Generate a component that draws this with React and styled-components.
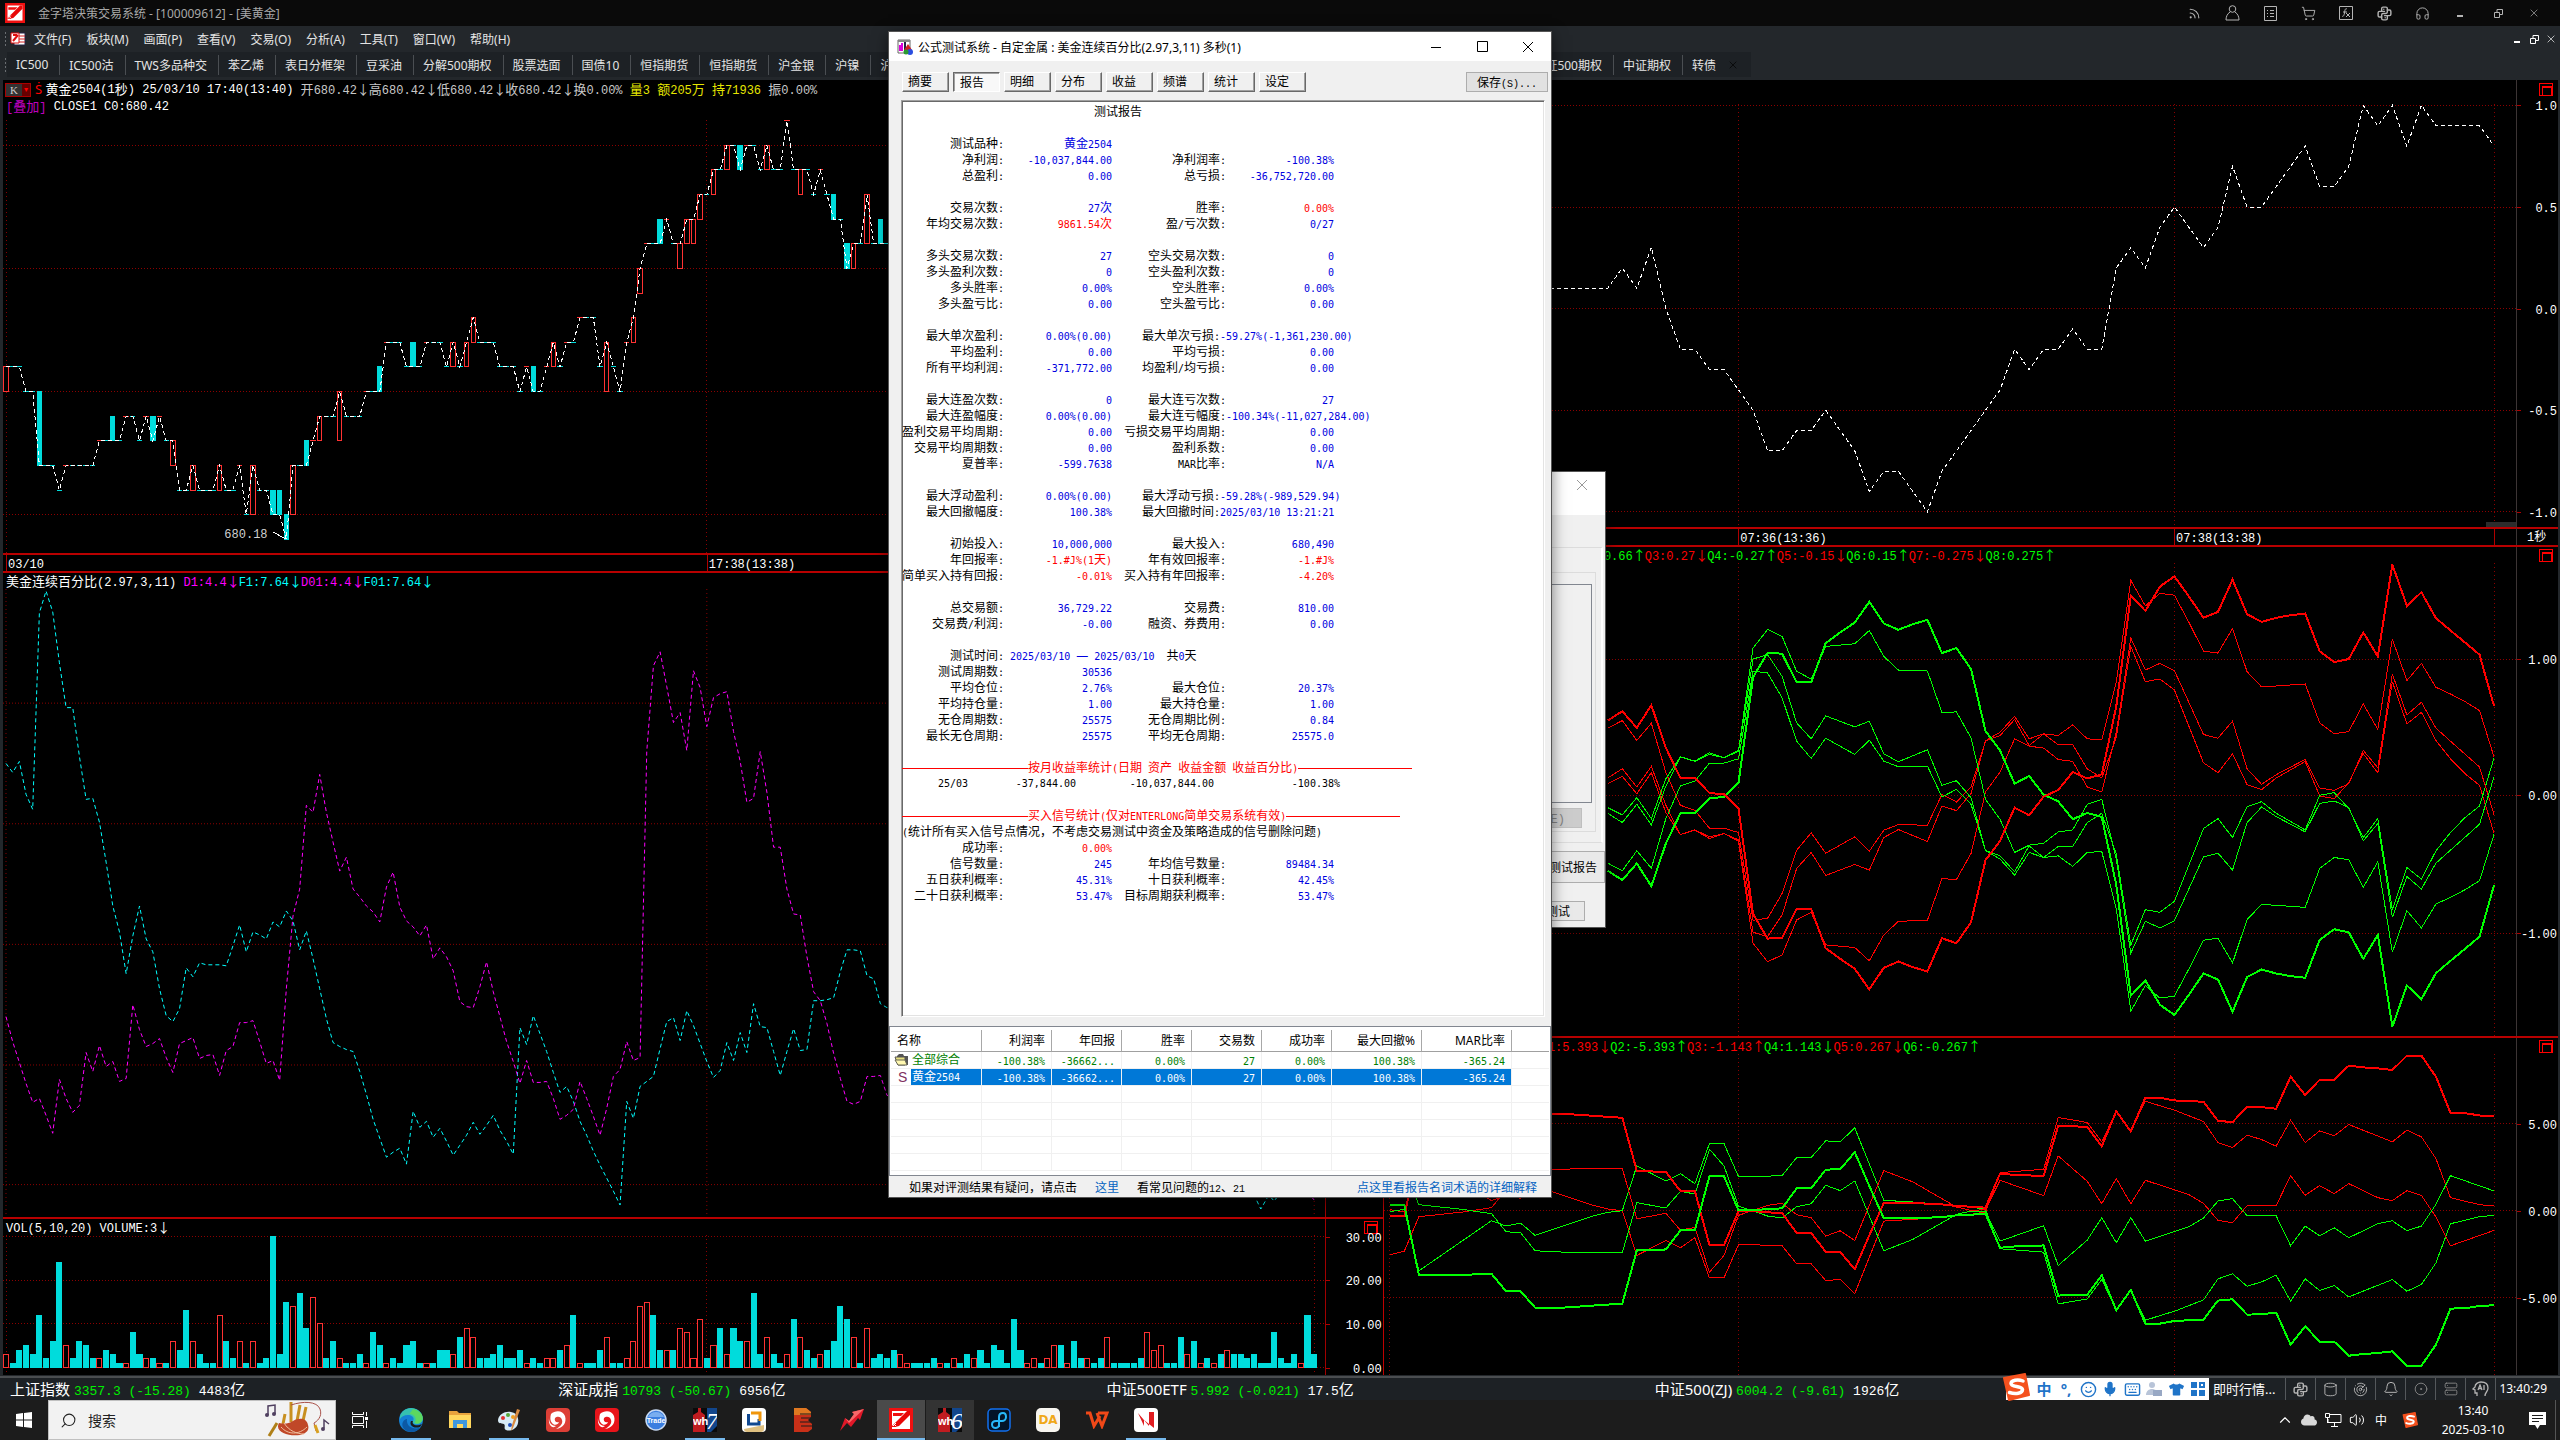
import React from 'react';
import styled, { createGlobalStyle, css } from 'styled-components';
import {
  Rss, ShoppingCart, Headphones, Search, Cylinder, Radar, Bell,
  CircleDot, Server, ChevronUp, Volume2, Mic, Keyboard, Smile,
} from 'lucide-react';
import { TbBrandPython } from 'react-icons/tb';
import { FaTshirt, FaCloud } from 'react-icons/fa';

const SANS = '"Noto Sans", "Noto Sans CJK SC", sans-serif';
const MONO = '"Liberation Mono", "Noto Sans CJK SC", monospace';

const GlobalStyle = createGlobalStyle`
  * { box-sizing: border-box; }
  body { margin: 0; background: #000; font-family: ${SANS}; font-size: 12px; }
  button, input { font: inherit; color: inherit; }
  button { padding: 0; border: 0; background: none; cursor: pointer; }
  a { text-decoration: none; }
`;

/* ---------- data ---------- */

const PRICE = [
  7, 7, 7, 6, 6, 3, 3, 3, 2, 3, 3, 3, 3, 3, 4, 4, 4, 4, 5, 5, 4, 5, 4, 5, 4, 4, 2, 2, 3, 2,
  2, 2, 3, 2, 2, 3, 1, 3, 2, 2, 1, 1, 0, 3, 3, 3, 4, 5, 5, 5, 6, 5, 5, 5, 6, 6, 6, 8, 8, 8,
  7, 7, 7, 8, 8, 8, 7, 8, 7, 8, 9, 8, 8, 8, 7, 7, 7, 6, 7, 6, 6, 7, 8, 7, 8, 8, 9, 9, 9, 7,
  8, 7, 6, 8, 9, 11, 12, 12, 12, 13, 12, 12, 13, 13, 14, 14, 15, 15, 16, 16, 15, 16, 16, 15,
  16, 15, 15, 17, 15, 15, 15, 14, 15, 14, 13, 13, 11, 12, 12, 14, 12, 12, 12,
];

// index, high, low, rising
const CANDLES = [
  [0, 7, 6, 1], [5, 6, 3, 0], [16, 5, 4, 0], [22, 5, 4, 0], [25, 4, 3, 1], [28, 3, 2, 1],
  [32, 3, 2, 1], [37, 3, 1, 1], [40, 2, 1, 0], [41, 2, 1, 0], [42, 1, 0, 0], [43, 3, 1, 1],
  [45, 4, 3, 0], [47, 5, 4, 1], [50, 6, 4, 1], [56, 7, 6, 0], [61, 8, 7, 0], [67, 8, 7, 1],
  [69, 8, 7, 1], [70, 9, 8, 1], [79, 7, 6, 0], [82, 8, 7, 1], [90, 8, 6, 1], [94, 9, 8, 1],
  [95, 11, 10, 1], [98, 13, 12, 0], [101, 12, 11, 1], [102, 13, 12, 1], [103, 13, 12, 1],
  [104, 14, 13, 1], [106, 15, 14, 1], [108, 16, 15, 1], [110, 16, 15, 0], [114, 16, 15, 1],
  [119, 15, 14, 1], [124, 14, 13, 0], [126, 12, 11, 0], [127, 12, 11, 1], [129, 14, 12, 1],
  [131, 13, 12, 0],
];

const LINE_F = [
  764, 773, 762, 795, 810, 613, 591, 612, 663, 708, 708, 757, 800, 799, 823, 863, 907, 933, 975,
  937, 907, 940, 953, 990, 1017, 1023, 1010, 969, 978, 964, 966, 966, 966, 967, 947, 926, 953,
  933, 936, 940, 923, 928, 912, 922, 951, 932, 960, 990, 1020, 1044, 1048, 1051, 1053, 1073, 1096,
  1121, 1140, 1159, 1154, 1150, 1166, 1113, 1129, 1123, 1139, 1130, 1143, 1157, 1147, 1137, 1124,
  1136, 1127, 1117, 1132, 1143, 1156, 1029, 1046, 1017, 1035, 1053, 1074, 1094, 1088, 1103, 1123,
  1137, 1153, 1167, 1180, 1193, 1207, 1103, 1120, 1088, 1083, 1078, 1050, 1023, 1019, 1042, 1012,
  1027, 1045, 1063, 1079, 1072, 1044, 1062, 1034, 1054, 1005, 1028, 1029, 1053, 1077, 1053, 1030,
  1052, 1051, 1002, 1002, 1001, 999, 973, 951, 951, 952, 977, 980, 1005, 1009, 1009,
];

const LINE_D = [
  1018, 1043, 1064, 1085, 1104, 1100, 1117, 1135, 1081, 1100, 1114, 1107, 1054, 1073, 1047, 1068,
  1063, 1083, 1080, 1006, 1031, 1048, 1045, 1040, 1059, 1074, 1045, 1042, 1039, 1060, 1057, 1056,
  1077, 1052, 1048, 1024, 1024, 1022, 1043, 1065, 1062, 1082, 990, 917, 890, 806, 813, 775, 813,
  843, 872, 858, 890, 898, 907, 913, 923, 888, 873, 908, 922, 928, 937, 926, 960, 949, 958, 972,
  1003, 1008, 1009, 988, 963, 993, 1018, 1043, 1063, 1085, 1062, 1084, 1084, 1083, 1100, 1121,
  1117, 1111, 1083, 1100, 1118, 1137, 1110, 1078, 1071, 1043, 1062, 1059, 752, 666, 652, 687, 723,
  713, 751, 671, 688, 727, 698, 694, 692, 732, 762, 803, 799, 752, 793, 848, 848, 890, 915, 916,
  958, 993, 1002, 1025, 1055, 1080, 1103, 1106, 1103, 1078, 1078, 1077, 1097, 1099,
];

// positive = rising bar, negative = falling bar
const VOLUME = [
  3, -1, -4, -5, -3, -12, -2, -6, -24, 5, -2, -6, -5, -2, 2, -4, -3, -1, 1, -8, -3, 2, -2, 1, -1,
  6, -4, -13, 6, -3, -1, -1, 12, -6, -2, 6, -1, 6, -1, -2, -30, -3, -15, 14, -17, -9, 16, 10, -2,
  -6, 2, -1, -1, -3, 1, -8, -5, 1, -2, -1, -5, -6, -1, 1, -1, -4, -4, 3, -7, 9, 7, -2, -2, -3, -5,
  -2, -2, -4, 1, -2, -1, 2, 2, -4, 5, -12, 1, -1, -1, -4, 7, -1, -1, 2, 6, 14, 15, -12, -4, 4, -4,
  9, 8, 2, 11, -2, 5, -9, 3, -9, -6, 6, -17, -3, 7, -3, -1, 3, -11, 7, -4, -2, 3, -4, -6, -14, -11,
  7, -1, 9, -2, -3, -2, -4, 3, 1, -1, -1, -1, -2, 1, -1, 2, -1, -3, 2, -4, -1, -5, -4, -1, -11, -4,
  1, 2, -1, 2, 5, -5, 1, -6, -2, 2, -1, -2, 7, -1, -1, -1, -1, -2, 8, 4, 5, -1, -1, -7, 3, -6, 1,
  -2, 1, -3, 4, -3, -3, -2, -3, -1, -1, -8, -2, -1, -3, 1, -12, -3,
];

const pairs = (text) => text.trim().split(/\s+/).map((p) => p.split(':').map(Number));
const mirror = (points, zero) => points.map(([x, y]) => [x, 2 * zero - y]);

const CLOSE = pairs(`-13:.1 -9:.1 -8:.2 -7:.1 -6:.3 -5:0 -4:-.2 -3:-.2 -2:-.3 -1:-.3 0:-.4 1:-.5
  2:-.7 3:-.7 4:-.6 5:-.6 6:-.5 7:-.6 8:-.7 9:-.9 10:-.8 11:-.8 12:-.9 13:-1 14:-.8 15:-.7 16:-.6
  17:-.5 18:-.4 19:-.2 20:-.3 21:-.2 22:-.2 23:-.1 24:-.2 25:-.2 26:.2 27:.3 28:.2 29:.4 30:.5 31:.4
  32:.3 33:.4 34:.7 35:.5 36:.5 37:.6 38:.7 39:.8 40:.6 41:.6 42:.7 43:1 44:.9 45:1 46:.8 47:1
  48:.9 51:.9 52:.8`).map(([x, y]) => [x, -y]);

const MID_ZERO = 769;
const MID_MAIN = pairs(`-9:543 -8:515 -7:565 -6:497 -5:625 -4:716 -3:716 -2:761 -1:765 0:808 1:1125
  2:1199 3:1196 4:1110 5:1110 6:1228 7:1260 8:1290 9:1352 10:1287 11:1268 12:1285 13:1298 14:1198
  15:1213 16:1150 17:963 18:905 19:805 20:828 21:772 22:752 23:698 24:717 25:705 26:500 27:167
  28:213 29:140 30:109 31:170 32:234 33:216 34:119 35:223 36:246 37:234 38:226 39:221 40:335 41:367
  42:358 43:278 44:350 45:74 46:198 47:157 48:235 49:272 50:308 51:345 52:500`);
const MID_THIN = [
  pairs(`-9:972 -8:995 -7:935 -6:987 -5:838 -4:740 -3:725 -2:671 -1:671 0:658 1:394 2:400 3:475
    4:605 5:657 6:596 8:645 9:602 10:665 11:682 13:680 14:773 15:750 16:795 17:934 18:950 19:998
    20:920 21:955 22:922 23:922 24:850 25:822 26:945 27:1218 28:1112 29:1120 30:1087 32:868 33:838
    34:895 35:802 36:787 37:822 39:872 40:768 41:760 42:808 43:895 44:838 45:1112 46:985 47:1020
    48:935 49:880 50:835 51:800 52:655`),
  pairs(`-9:822 -8:850 -7:795 -6:857 -5:740 -4:652 -3:666 -2:645 -1:655 0:636 1:358 2:345 3:410
    4:550 5:598 6:529 8:562 9:545 10:643 11:667 13:631 14:738 15:724 16:775 17:934 18:960 19:1008
    20:940 21:955 22:950 23:982 24:940 25:937 26:1110 27:1417 28:1340 29:1378 30:1372 31:1290
    32:1204 33:1198 34:1272 35:1142 36:1096 39:1105 40:988 41:955 42:962 43:1045 44:968 45:1240
    46:1115 47:1167 48:1095 49:1075 50:1052 51:1025 52:885`),
  pairs(`-9:805 -8:827 -7:775 -6:838 -5:718 -4:652 -3:665 -2:640 -1:655 0:632 1:325 2:269 3:290
    4:395 5:418 6:320 8:312 9:272 10:350 11:391 13:394 14:519 15:517 16:595 17:780 18:840 19:940
    20:918 21:912 22:878 23:872 24:795 25:780 26:960 27:1243 28:1147 29:1167 30:1145 32:953 33:942
    34:993 35:850 36:803 37:832 39:878 40:792 41:785 42:805 43:905 44:853 45:1135 46:1012 47:1050
    48:972 51:855 52:712`),
];

const LOW_ZERO = 544;
const LOW_MAIN = pairs(`-24:527 -23:527 -22:736 -19:736 -17:733 -16:785 -15:785 -14:834 -12:834
  -8:822 -7:663 -5:660 -4:603 -3:602 -2:441 -1:441 0:543 1:543 2:539 3:537 4:477 5:477 6:421 7:420
  8:369 9:470 10:567 12:567 14:563 15:558 16:556 17:553 18:655 19:651 21:648 22:798 24:795 25:737
  26:842 27:781 28:882 29:882 30:874 32:870 33:813 34:809 35:855 36:854 37:849 38:945 39:890 40:936
  41:936 42:978 43:973 44:970 45:965 46:1008 47:1008 48:945 49:837 50:836 51:829 52:827`);
const LOW_THIN = [
  pairs(`-24:547 -23:540 -22:724 -17:574 -16:590 -15:581 -14:618 -10:560 -9:549 -8:544 -7:410 -5:455
    -4:433 -3:463 -2:343 -1:343 0:442 1:442 3:439 4:385 5:385 6:335 7:338 8:296 10:513 12:518 14:525
    16:533 17:540 18:658 21:668 22:823 24:808 25:750 26:842 27:781 28:872 29:858 30:845 32:811
    33:748 34:733 35:770 36:757 37:737 38:815 39:748 40:783 41:768 42:802 45:750 46:785 47:765
    48:700 49:583 51:562 52:558`),
  pairs(`-24:412 -23:423 -22:526 -19:540 -17:553 -16:607 -15:610 -14:664 -11:670 -8:670 -7:520
    -5:536 -4:486 -3:494 -2:360 -1:410 0:530 1:545 2:560 3:566 4:532 5:523 6:468 7:484 8:455 10:664
    12:630 14:580 15:555 16:545 17:547 18:635 21:589 22:708 24:632 25:565 26:640 27:565 28:635
    31:592 32:566 33:515 34:508 35:559 37:559 38:649 39:590 40:619 41:595 42:625 44:583 45:574
    46:604 47:590 48:525 49:439 52:485`),
];

/* ---------- mixed width text ---------- */

const Lat = styled.span`
  font-family: ${MONO};
  font-size: var(--lat, 12px);
  line-height: 1;
`;

const Arrow = styled.span`
  display: inline-block;
  width: 12px;
  text-align: center;
`;

// Latin runs are half width, Chinese runs are full width
function Mixed({ children }) {
  return String(children).split(/([\x20-\x7e]+|[↓↑])/).filter(Boolean).map((part, i) => {
    if (part === '↓' || part === '↑') return <Arrow key={i}>{part}</Arrow>;
    return /^[\x20-\x7e]/.test(part) ? <Lat key={i}>{part}</Lat> : part;
  });
}

/* ---------- frame ---------- */

const Desktop = styled.div`
  position: relative;
  min-height: 100vh;
  display: flex;
  flex-direction: column;
  overflow: hidden;
  background: #23272b;
  color: #fff;
`;

const TitleBar = styled.header`
  display: flex;
  align-items: center;
  height: 26px;
  padding: 0 9px 0 5px;
  background: #0a0a0a;
  color: #a8a8a8;
`;

const TitleText = styled.h1`
  margin: 0 auto 0 13px;
  font-size: 12px;
  font-weight: 400;
`;

const TitleIcons = styled.div`
  display: flex;
  align-items: center;
`;

const IconButton = styled.button`
  display: flex;
  align-items: center;
  justify-content: center;
  width: ${(p) => p.$w || 38}px;
  height: 20px;
  color: ${(p) => p.$color || '#b4b4b4'};
`;

const MenuBar = styled.nav`
  display: flex;
  align-items: center;
  height: 26px;
  padding: 0 1px 0 4px;
  gap: 15px;
  background: #23272b;
  color: #e4e4e4;
`;

const Grip = styled.i`
  width: 3px;
  height: 16px;
  background-image: radial-gradient(#6a6e72 1px, transparent 1px);
  background-size: 3px 4px;
`;

const MenuIcon = styled.span`
  display: flex;
  margin: 0 -7px 0 -12px;
`;

const MenuRight = styled.div`
  display: flex;
  margin-left: auto;
`;

const TabBar = styled.nav`
  display: flex;
  align-items: center;
  height: 27px;
  padding: 0 0 2px 4px;
  color: #e4e4e4;
`;

const TabGroup = styled.div`
  display: flex;
  align-items: center;
  height: 25px;
  background: #1d2125;
  flex: 0 0 auto;
`;

const PageTab = styled.button`
  height: 20px;
  padding: 0 11px 0 9px;
  border-right: ${(p) => (p.$last ? 0 : '1px solid #4a4e52')};
  white-space: nowrap;
`;

const HiddenTabs = styled.div`
  flex: 0 0 608px;
  height: 25px;
  background: #1d2125;
`;

const TabClose = styled.button`
  width: 12px;
  margin-right: 12px;
  color: #000;
`;

/* ---------- chart panels ---------- */

const Workspace = styled.main`
  flex: 1;
  display: grid;
  grid-template-columns: 54fr 46fr;
  min-height: 900px;
  padding: 1px 2px 1px 3px;
`;

const Column = styled.section`
  display: grid;
  grid-template-rows: ${(p) => p.$rows};
  min-width: 0;
  border-left: ${(p) => (p.$edge ? '1px solid #c00000' : 0)};
  background: #000;
`;

const PanelBox = styled.section`
  display: flex;
  flex-direction: column;
  min-height: 0;
  min-width: 0;
  border-bottom: ${(p) => (p.$last ? 0 : '2px solid #b80000')};
`;

const Strip = styled.div`
  display: flex;
  ${(p) => (p.$grow ? css`flex: 1; min-height: 0;` : css`height: ${p.$h}px;`)}
`;

const Main = styled.div`
  position: relative;
  flex: 1;
  min-width: 0;
`;

const Side = styled.div`
  position: relative;
  flex: 0 0 ${(p) => p.$w}px;
  border-left: 1px solid ${(p) => p.$line};
`;

const Head = styled(Main)`
  padding: ${(p) => (p.$tall ? 1 : 0)}px 0 0 3px;
  font-size: 13px;
  line-height: 17px;
  white-space: pre;
  --lat: 12px;
`;

const HeadLine = styled.div`
  display: flex;
  align-items: center;
  height: 17px;
`;

const Tint = styled.span`
  color: ${(p) => p.$c};
`;

const HiddenName = styled.span`
  display: inline-block;
  width: ${(p) => p.$w}px;
`;

const KButton = styled.button`
  display: flex;
  width: 26px;
  height: 14px;
  margin: 0 4px 0 -1px;
  border: 1px solid #a00;
  background: #333;
  color: #ccc;
  font: 11px/12px "Liberation Serif", serif;
  & > span { width: 16px; }
  & > i { flex: 1; background: #600; color: #f00; font: 8px/12px "DejaVu Sans", sans-serif; }
`;

const PlotSvg = styled.svg`
  position: absolute;
  inset: 0;
  width: 100%;
  height: 100%;
  display: block;
  shape-rendering: crispEdges;
  & * { vector-effect: non-scaling-stroke; }
`;

const Tick = styled.span`
  position: absolute;
  right: 1px;
  height: 16px;
  margin-top: -8px;
  font-size: 13px;
  line-height: 16px;
`;

const TickMark = styled.i`
  position: absolute;
  left: 0;
  width: 4px;
  height: 1px;
  background: #b00000;
`;

const TimeMain = styled(Main)`
  border-top: 2px solid #b80000;
  font-size: 13px;
`;

const TimeSide = styled(Side)`
  border-top: 2px solid #b80000;
  padding-left: 10px;
  font-size: 12px;
  line-height: 16px;
`;

const TimeLabel = styled.span`
  position: absolute;
  top: 0;
  padding-left: 1px;
  height: 16px;
  line-height: 16px;
  border-left: 1px solid #b00000;
  white-space: nowrap;
`;

const PriceNote = styled.span`
  position: absolute;
  margin: -10px 0 0 -62px;
  font-size: 12px;
  line-height: 16px;
  color: #d0d0d0;
`;

const Expand = styled.button`
  position: absolute;
  right: 5px;
  top: ${(p) => p.$top || 2}px;
  width: 14px;
  height: 13px;
  border: 1px solid #f00;
  &::after {
    content: '';
    display: block;
    width: 8px;
    height: 7px;
    margin: 2px;
    border: 1px solid #f00;
    border-top-width: 2px;
  }
`;

const DARK_RED = '#8c0000';

function Chart({ box, rows, cols, children }) {
  const [x0, x1, y0, y1] = box;
  return (
    <PlotSvg viewBox={`${x0} ${y0} ${x1 - x0} ${y1 - y0}`} preserveAspectRatio="none" aria-hidden="true">
      {rows.map((y) => (
        <line key={`h${y}`} x1={x0} x2={x1} y1={y} y2={y} stroke={DARK_RED} strokeDasharray="1 2" />
      ))}
      {cols.map((x) => (
        <line key={`v${x}`} x1={x} x2={x} y1={y0} y2={y1} stroke={DARK_RED} strokeDasharray="1 3" />
      ))}
      {children}
    </PlotSvg>
  );
}

function Poly({ points, color, width = 1, dash }) {
  return (
    <polyline
      points={points.map((p) => p.join(',')).join(' ')}
      fill="none" stroke={color} strokeWidth={width} strokeDasharray={dash}
    />
  );
}

function AxisTicks({ box, ticks }) {
  const [, , y0, y1] = box;
  return ticks.map(([y, label]) => {
    const top = `${((y - y0) / (y1 - y0)) * 100}%`;
    return (
      <React.Fragment key={label}>
        <TickMark style={{ top }} />
        <Tick style={{ top }}><Lat>{label}</Lat></Tick>
      </React.Fragment>
    );
  });
}

const LX0 = -0.45;
const LX1 = 197.57;
const RX0 = -24.4;
const RX1 = 53.53;
const L_COLS = [0, 105, 196];
const R_COLS = [-24, 0, 30, 52];
const R_LINE = '#3c3434';
const R_AXIS = 42;
const indexed = (ys) => ys.map((y, i) => [i, y]);
const at = (x, x0, x1) => ({ left: `${((x - x0) / (x1 - x0)) * 100}%` });

function PricePanel() {
  const box = [LX0, LX1, -17.03, 0.555];
  const drawn = new Set(CANDLES.map((c) => c[0]));
  return (
    <PanelBox>
      <Strip $h={40}>
        <Head $tall>
          <HeadLine>
            <KButton><span>K</span><i>▾</i></KButton>
            <Tint $c="#f00">Ṡ </Tint>
            <Mixed>{'黄金2504(1秒) 25/03/10 17:40(13:40) '}</Mixed>
            <Tint $c="#c8c8c8"><Mixed>{'开680.42↓高680.42↓低680.42↓收680.42↓换0.00% '}</Mixed></Tint>
            <Tint $c="#e6e600"><Mixed>{'量3 额205万 持71936 '}</Mixed></Tint>
            <Tint $c="#c8c8c8"><Mixed>振0.00%</Mixed></Tint>
          </HeadLine>
          <HeadLine>
            <Tint $c="#c000c0"><Mixed>{'[叠加] '}</Mixed></Tint>
            <Mixed>CLOSE1 C0:680.42</Mixed>
          </HeadLine>
        </Head>
        <Side $w={58} $line="#a00000" />
      </Strip>
      <Strip $grow>
        <Main>
          <Chart box={box} rows={[-16, -11, -6, -1]} cols={L_COLS}>
            {PRICE.map((v, i) => !drawn.has(i) && (
              <line
                key={i} x1={i - 0.4} x2={i + 0.4} y1={-v} y2={-v}
                stroke={v > (PRICE[i - 1] ?? v) ? '#ff3232' : '#00dcdc'}
              />
            ))}
            {CANDLES.map(([i, hi, lo, up]) => (
              <rect
                key={i} x={i - 0.33} width={0.66} y={-hi} height={hi - lo}
                fill={up ? '#000' : '#00dcdc'} stroke={up ? '#ff3232' : '#00dcdc'}
              />
            ))}
            <Poly points={indexed(PRICE.map((v) => -v))} color="#fff" dash="4 3" />
            <line x1={40} x2={42} y1={-0.3} y2={0} stroke="#fff" />
          </Chart>
          <PriceNote style={{ ...at(42, LX0, LX1), top: '96%' }}><Lat>680.18</Lat></PriceNote>
        </Main>
        <Side $w={58} $line="#a00000" />
      </Strip>
      <Strip $h={18}>
        <TimeMain>
          <TimeLabel style={at(0, LX0, LX1)}><Lat>03/10</Lat></TimeLabel>
          <TimeLabel style={at(105, LX0, LX1)}><Lat>17:38(13:38)</Lat></TimeLabel>
        </TimeMain>
        <TimeSide $w={58} $line="#a00000" />
      </Strip>
    </PanelBox>
  );
}

function PercentPanel() {
  const tail = [[178.5, 1190], [179, 1201], [179.6, 1196]];
  const tail2 = [[186.5, 1190], [188, 1211], [189.2, 1197], [190, 1203], [191, 1194]];
  return (
    <PanelBox>
      <Strip $h={16}>
        <Head>
          <Mixed>{'美金连续百分比(2.97,3,11) '}</Mixed>
          <Tint $c="#f0f"><Mixed>D1:4.4↓</Mixed></Tint>
          <Tint $c="#0ff"><Mixed>F1:7.64↓</Mixed></Tint>
          <Tint $c="#f0f"><Mixed>D01:4.4↓</Mixed></Tint>
          <Tint $c="#0ff"><Mixed>F01:7.64↓</Mixed></Tint>
        </Head>
        <Side $w={58} $line="#a00000" />
      </Strip>
      <Strip $grow>
        <Main>
          <Chart box={[LX0, LX1, 589, 1219]} rows={[703.5, 824.5, 945.5, 1066.5, 1186.5]} cols={L_COLS}>
            <Poly points={indexed(LINE_F)} color="#0ff" dash="4 3" />
            <Poly points={indexed(LINE_D)} color="#f0f" dash="4 3" />
            <Poly points={tail} color="#0ff" dash="4 3" />
            <Poly points={tail2} color="#0ff" dash="4 3" />
            <line x1={195} x2={196} y1={1194} y2={1202} stroke="#f0f" strokeDasharray="4 3" />
          </Chart>
        </Main>
        <Side $w={58} $line="#a00000" />
      </Strip>
    </PanelBox>
  );
}

function VolumePanel() {
  const box = [LX0, LX1, -30.4, 1.7];
  return (
    <PanelBox $last>
      <Strip $h={16}>
        <Head><Lat>{'VOL(5,10,20) VOLUME:3'}</Lat><Arrow>↓</Arrow></Head>
        <Side $w={58} $line="#a00000"><Expand aria-label="展开" /></Side>
      </Strip>
      <Strip $grow>
        <Main>
          <Chart box={box} rows={[-30, -20, -10, 0]} cols={L_COLS}>
            {VOLUME.map((v, i) => (
              <rect
                key={i} x={i - 0.38} width={0.76} y={-Math.abs(v)} height={Math.abs(v)}
                fill={v > 0 ? '#000' : '#00dcdc'} stroke={v > 0 ? '#ff3232' : '#00dcdc'}
              />
            ))}
          </Chart>
        </Main>
        <Side $w={58} $line="#a00000">
          <AxisTicks box={box} ticks={[[-30, '30.00'], [-20, '20.00'], [-10, '10.00'], [0, '0.00']]} />
        </Side>
      </Strip>
    </PanelBox>
  );
}

const Thumb = styled.i`
  position: absolute;
  right: 0;
  bottom: 0;
  width: 30px;
  height: 5px;
  background: #2c2c2c;
`;

function ClosePanel() {
  const box = [RX0, RX1, -1.007, 1.073];
  return (
    <PanelBox>
      <Strip $h={24}>
        <Head />
        <Side $w={R_AXIS} $line={R_LINE}><Expand $top={3} aria-label="展开" /></Side>
      </Strip>
      <Strip $grow>
        <Main>
          <Chart box={box} rows={[-1, -0.5, 0, 0.5, 1]} cols={R_COLS}>
            <Poly points={CLOSE} color="#fff" dash="4 3" />
          </Chart>
          <Thumb />
        </Main>
        <Side $w={R_AXIS} $line={R_LINE}>
          <AxisTicks box={box} ticks={[[-1, '1.0'], [-0.5, '0.5'], [0, '0.0'], [0.5, '-0.5'], [1, '-1.0']]} />
        </Side>
      </Strip>
      <Strip $h={18}>
        <TimeMain>
          <TimeLabel style={at(0, RX0, RX1)}><Lat>07:36(13:36)</Lat></TimeLabel>
          <TimeLabel style={at(30, RX0, RX1)}><Lat>07:38(13:38)</Lat></TimeLabel>
          <TimeLabel style={at(52, RX0, RX1)} />
        </TimeMain>
        <TimeSide $w={R_AXIS} $line={R_LINE}><Mixed>1秒</Mixed></TimeSide>
      </Strip>
    </PanelBox>
  );
}

const RED = '#f00';
const GREEN = '#0f0';

function FanPanel({ box, rows, ticks, zero, main, thin, flip, head, lead, last }) {
  const [mainA, mainB] = flip ? [GREEN, RED] : [RED, GREEN];
  return (
    <PanelBox $last={last}>
      <Strip $h={16}>
        <Head>
          <HiddenName $w={lead} />
          {head.map((text, i) => <Tint key={text} $c={i % 2 ? GREEN : RED}><Mixed>{text}</Mixed></Tint>)}
        </Head>
        <Side $w={R_AXIS} $line={R_LINE}><Expand aria-label="展开" /></Side>
      </Strip>
      <Strip $grow>
        <Main>
          <Chart box={box} rows={rows} cols={R_COLS}>
            {thin.map((line, i) => (
              <React.Fragment key={i}>
                <Poly points={mirror(line, zero)} color={RED} />
                <Poly points={line} color={GREEN} />
              </React.Fragment>
            ))}
            <Poly points={mirror(main, zero)} color={mainB} width={2} />
            <Poly points={main} color={mainA} width={2} />
          </Chart>
        </Main>
        <Side $w={R_AXIS} $line={R_LINE}><AxisTicks box={box} ticks={ticks} /></Side>
      </Strip>
    </PanelBox>
  );
}

/* ---------- windows ---------- */

const Window = styled.section`
  position: absolute;
  display: flex;
  flex-direction: column;
  background: #f0f0f0;
  color: #000;
  border: 1px solid #555;
  box-shadow: 0 4px 14px rgba(0, 0, 0, 0.5);
`;

const ReportWindow = styled(Window)`
  left: 888px;
  top: 31px;
  width: 664px;
  height: 1167px;
`;

const BackWindow = styled(Window)`
  left: 1300px;
  top: 471px;
  width: 306px;
  height: 457px;
`;

const WindowTitle = styled.header`
  display: flex;
  align-items: center;
  height: ${(p) => p.$h}px;
  padding: 0 0 0 8px;
  background: #fff;
`;

const WindowName = styled.h2`
  margin: 0 auto 0 5px;
  font-size: 12px;
  font-weight: 400;
`;

const WindowButton = styled(IconButton)`
  width: 46px;
  height: 29px;
`;

const Tools = styled.div`
  display: flex;
  gap: 4px;
  height: 39px;
  padding: 11px 3px 0 13px;
`;

const ToolTab = styled.button`
  width: 47px;
  height: 20px;
  padding: 0 0 0 5px;
  text-align: left;
  line-height: 16px;
  border: 1px solid;
  border-color: #fff #696969 #696969 #fff;
  box-shadow: inset -1px -1px #a0a0a0;
  ${(p) => p.$active && css`
    border-color: #696969 #fff #fff #696969;
    box-shadow: inset 1px 1px #a0a0a0;
    background: #f8f8f8;
    padding: 2px 0 0 6px;
  `}
`;

const SaveButton = styled.button`
  width: 82px;
  height: 20px;
  margin-left: auto;
  border: 1px solid #adadad;
  background: #e1e1e1;
  --lat: 10px;
`;

const ReportBox = styled.div`
  flex: 1;
  margin: 0 6px 9px 12px;
  padding-top: 3px;
  border: 1px solid;
  border-color: #a0a0a0 #fff #fff #a0a0a0;
  box-shadow: inset 1px 1px #696969, inset -1px -1px #e3e3e3;
  background: #fff;
`;

const ReportTable = styled.table`
  table-layout: fixed;
  width: 432px;
  border-spacing: 0;
  line-height: 16px;
  --lat: 10px;
  & td, & th {
    height: 16px;
    padding: 0;
    font-weight: 400;
    text-align: right;
    white-space: pre;
  }
  & ${Lat} { font-family: "DejaVu Sans Mono", monospace; }
`;

const Value = styled.td`
  color: ${(p) => (p.$red ? '#f00' : '#0000e0')};
`;

const Tight = styled.div`
  margin-left: ${(p) => (p.$by ? -6 : 0)}px;
`;

const TightLabel = styled.div`
  padding-right: 6px;
`;

const Rule = styled.i`
  flex: 0 0 ${(p) => p.$w}px;
  height: 1px;
  background: #f00;
`;

const RuleRow = styled.div`
  display: flex;
  align-items: center;
  height: 16px;
  color: #f00;
  & > span { flex: none; }
`;

const MonthRow = styled.div`
  display: grid;
  grid-template-columns: 66px 108px 138px 126px;
  align-items: center;
  height: 16px;
`;

const Plain = styled.div`
  text-align: left;
`;

const Caption = styled.div`
  text-align: center;
`;

// label, value, label, value; "!" marks a red value and "<" a value that starts early
const REPORT = [
  ['测试品种', '黄金2504'],
  ['净利润', '-10,037,844.00', '净利润率', '-100.38%'],
  ['总盈利', '0.00', '总亏损', '-36,752,720.00'],
  null,
  ['交易次数', '27次', '胜率', '!0.00%'],
  ['年均交易次数', '!9861.54次', '盈/亏次数', '0/27'],
  null,
  ['多头交易次数', '27', '空头交易次数', '0'],
  ['多头盈利次数', '0', '空头盈利次数', '0'],
  ['多头胜率', '0.00%', '空头胜率', '0.00%'],
  ['多头盈亏比', '0.00', '空头盈亏比', '0.00'],
  null,
  ['最大单次盈利', '0.00%(0.00)', '最大单次亏损', '<-59.27%(-1,361,230.00)'],
  ['平均盈利', '0.00', '平均亏损', '0.00'],
  ['所有平均利润', '-371,772.00', '均盈利/均亏损', '0.00'],
  null,
  ['最大连盈次数', '0', '最大连亏次数', '27'],
  ['最大连盈幅度', '0.00%(0.00)', '最大连亏幅度', '-100.34%(-11,027,284.00)'],
  ['盈利交易平均周期', '0.00', '亏损交易平均周期', '0.00'],
  ['交易平均周期数', '0.00', '盈利系数', '0.00'],
  ['夏普率', '-599.7638', 'MAR比率', 'N/A'],
  null,
  ['最大浮动盈利', '0.00%(0.00)', '最大浮动亏损', '<-59.28%(-989,529.94)'],
  ['最大回撤幅度', '100.38%', '最大回撤时间', '<2025/03/10 13:21:21'],
  null,
  ['初始投入', '10,000,000', '最大投入', '680,490'],
  ['年回报率', '!-1.#J%(1天)', '年有效回报率', '!-1.#J%'],
  ['简单买入持有回报', '!-0.01%', '买入持有年回报率', '!-4.20%'],
  null,
  ['总交易额', '36,729.22', '交易费', '810.00'],
  ['交易费/利润', '-0.00', '融资、券费用', '0.00'],
  null,
];

const REPORT_TAIL = [
  ['测试周期数', '30536'],
  ['平均仓位', '2.76%', '最大仓位', '20.37%'],
  ['平均持仓量', '1.00', '最大持仓量', '1.00'],
  ['无仓周期数', '25575', '无仓周期比例', '0.84'],
  ['最长无仓周期', '25575', '平均无仓周期', '25575.0'],
  null,
];

const SIGNALS = [
  ['成功率', '!0.00%'],
  ['信号数量', '245', '年均信号数量', '89484.34'],
  ['五日获利概率', '45.31%', '十日获利概率', '42.45%'],
  ['二十日获利概率', '53.47%', '目标周期获利概率', '53.47%'],
];

function Cell({ label, value }) {
  if (!label) return <td colSpan={2} />;
  const early = value[0] === '<';
  const red = value[0] === '!';
  const text = early || red ? value.slice(1) : value;
  const name = <Mixed>{`${label}:`}</Mixed>;
  return (
    <>
      <th scope="row">{early ? <TightLabel>{name}</TightLabel> : name}</th>
      <Value $red={red}><Tight $by={early}><Mixed>{text}</Mixed></Tight></Value>
    </>
  );
}

const reportRows = (rows) => rows.map((row, i) => (
  <tr key={i}>
    {row ? (
      <>
        <Cell label={row[0]} value={row[1]} />
        <Cell label={row[2]} value={row[3]} />
      </>
    ) : <td colSpan={4} />}
  </tr>
));

const ResultPane = styled.div`
  height: 150px;
  padding: 3px 1px 0;
  border: 1px solid #828790;
  background: #fff;
`;

const ResultTable = styled.table`
  width: 100%;
  table-layout: fixed;
  border-spacing: 0;
  --lat: 10px;
  & ${Lat} { font-family: "DejaVu Sans Mono", monospace; }
  & th {
    height: 22px;
    padding: 0 6px;
    border-right: 1px solid #a8a8a8;
    border-bottom: 1px solid #a0a0a0;
    font-weight: 400;
    line-height: 16px;
    text-align: right;
  }
  & td {
    height: 17px;
    padding: 0 6px;
    border-right: 1px solid #f0f0f0;
    border-bottom: 1px solid #f0f0f0;
    text-align: right;
    line-height: 15px;
    white-space: nowrap;
  }
  & th:first-child { text-align: left; }
  & td:first-child { padding: 0; text-align: left; }
  & th:last-child, & td:last-child { border-right: 0; }
`;

const ResultRow = styled.tr`
  color: ${(p) => (p.$picked ? '#fff' : '#008000')};
  ${(p) => p.$picked && css`
    & td:not(:first-child):not(:last-child) { background: #0078d7; }
  `}
`;

const NameCell = styled.div`
  display: flex;
  align-items: center;
  height: 16px;
  line-height: 16px;
  & > svg, & > b { flex: 0 0 20px; }
  & > b {
    padding-left: 7px;
    color: #803060;
    font: 14px/16px "Liberation Sans", sans-serif;
  }
  & > span { flex: 1; padding-left: 1px; background: ${(p) => (p.$picked ? '#0078d7' : 'none')}; }
`;

const WindowFoot = styled.footer`
  display: flex;
  align-items: center;
  height: 21px;
  padding: 0 14px 0 20px;
  gap: 18px;
  --lat: 10px;
  & a { color: #0563c1; }
  & a:last-child { margin-left: auto; }
`;

const RESULT_HEAD = ['名称', '利润率', '年回报', '胜率', '交易数', '成功率', '最大回撤%', 'MAR比率', ''];
const RESULT_WIDTH = [91, 70, 70, 70, 70, 70, 90, 90];
const RESULT_VALUES = ['-100.38%', '-36662...', '0.00%', '27', '0.00%', '100.38%', '-365.24'];
const TOOL_TABS = ['摘要', '报告', '明细', '分布', '收益', '频谱', '统计', '设定'];

const Cross = ({ size = 12, color = 'currentColor' }) => (
  <svg width={size} height={size} viewBox="0 0 12 12" stroke={color} fill="none"><path d="M1 1l10 10M11 1L1 11" /></svg>
);

const FolderIcon = () => (
  <svg width="20" height="14" viewBox="0 0 20 14">
    <path d="M6 3l2-2h4l1 2h4v9H6z" fill="#555" />
    <path d="M4 4h10v8H7z" fill="#e8e080" stroke="#555" />
    <path d="M4 7h10l2 5H7z" fill="#fff8b0" stroke="#665" />
  </svg>
);

const ReportIcon = () => (
  <svg width="16" height="16" viewBox="0 0 16 16">
    <path d="M1 1h12v13H1z" fill="#fff" stroke="#666" />
    <path d="M1 2h12" stroke="#888" strokeWidth="2" />
    <path d="M3 12V6M5 12V4" stroke="#d0d" strokeWidth="2" />
    <path d="M8 3v9" stroke="#224" strokeWidth="2" />
    <path d="M11 5l4 6h-8z" fill="#c22" />
    <circle cx="13" cy="13" r="3" fill="#2a4ee0" />
    <circle cx="9" cy="13" r="2.500" fill="#2a9a30" />
  </svg>
);

function TestReport() {
  return (
    <ReportWindow aria-label="公式测试系统">
      <WindowTitle $h={29}>
        <ReportIcon />
        <WindowName>公式测试系统 - 自定金属 : 美金连续百分比(2.97,3,11) 多秒(1)</WindowName>
        <WindowButton $color="#000" aria-label="最小化">
          <svg width="10" height="10" stroke="currentColor"><path d="M0 5.500h10" /></svg>
        </WindowButton>
        <WindowButton $color="#000" aria-label="最大化">
          <svg width="11" height="11" stroke="currentColor" fill="none"><path d="M.5.5h10v10H.5z" /></svg>
        </WindowButton>
        <WindowButton $color="#000" aria-label="关闭"><Cross /></WindowButton>
      </WindowTitle>
      <Tools>
        {TOOL_TABS.map((name) => <ToolTab key={name} $active={name === '报告'}>{name}</ToolTab>)}
        <SaveButton><Mixed>保存(S)...</Mixed></SaveButton>
      </Tools>
      <ReportBox>
        <ReportTable>
          <colgroup>
            <col width="102" /><col width="108" /><col width="114" /><col width="108" />
          </colgroup>
          <tbody>
            <tr><td colSpan={4}><Caption>测试报告</Caption></td></tr>
            <tr><td colSpan={4} /></tr>
            {reportRows(REPORT)}
            <tr>
              <th scope="row"><Mixed>测试时间:</Mixed></th>
              <td colSpan={3}>
                <Plain>
                  <Tint $c="#0000e0"><Mixed>{' 2025/03/10 — 2025/03/10'}</Mixed></Tint>
                  <Mixed>{'  共'}</Mixed>
                  <Tint $c="#0000e0"><Lat>0</Lat></Tint>
                  天
                </Plain>
              </td>
            </tr>
            {reportRows(REPORT_TAIL)}
            <tr>
              <td colSpan={4}>
                <RuleRow>
                  <Rule $w={126} />
                  <span><Mixed>按月收益率统计(日期 资产 收益金额 收益百分比)</Mixed></span>
                  <Rule $w={114} />
                </RuleRow>
              </td>
            </tr>
            <tr>
              <td colSpan={4}>
                <MonthRow><Lat>25/03</Lat><Lat>-37,844.00</Lat><Lat>-10,037,844.00</Lat><Lat>-100.38%</Lat></MonthRow>
              </td>
            </tr>
            <tr><td colSpan={4} /></tr>
            <tr>
              <td colSpan={4}>
                <RuleRow>
                  <Rule $w={126} />
                  <span><Mixed>买入信号统计(仅对ENTERLONG简单交易系统有效)</Mixed></span>
                  <Rule $w={114} />
                </RuleRow>
              </td>
            </tr>
            <tr>
              <td colSpan={4}>
                <Plain><Mixed>(统计所有买入信号点情况，不考虑交易测试中资金及策略造成的信号删除问题)</Mixed></Plain>
              </td>
            </tr>
            {reportRows(SIGNALS)}
          </tbody>
        </ReportTable>
      </ReportBox>
      <ResultPane>
        <ResultTable>
          <colgroup>
            {RESULT_WIDTH.map((w, i) => <col key={i} width={w} />)}
            <col />
          </colgroup>
          <thead>
            <tr>{RESULT_HEAD.map((name) => <th key={name} scope="col">{name}</th>)}</tr>
          </thead>
          <tbody>
            {['全部综合', '黄金2504'].map((name, row) => (
              <ResultRow key={name} $picked={row === 1}>
                <td>
                  <NameCell $picked={row === 1}>
                    {row === 0 ? <FolderIcon /> : <b>S</b>}
                    <span><Mixed>{name}</Mixed></span>
                  </NameCell>
                </td>
                {RESULT_VALUES.map((v, i) => <td key={i}><Lat>{v}</Lat></td>)}
                <td />
              </ResultRow>
            ))}
            {[0, 1, 2, 3, 4].map((row) => (
              <tr key={row}>{RESULT_HEAD.map((name) => <td key={name} />)}</tr>
            ))}
          </tbody>
        </ResultTable>
      </ResultPane>
      <WindowFoot>
        <span>如果对评测结果有疑问，请点击</span>
        <a href="#faq">这里</a>
        <span><Mixed>看常见问题的12、21</Mixed></span>
        <a href="#terms">点这里看报告名词术语的详细解释</a>
      </WindowFoot>
    </ReportWindow>
  );
}

const BackBody = styled.div`
  display: flex;
  flex-direction: column;
  align-items: flex-end;
  padding: 32px 2px 0 0;
`;

const BackFrame = styled.div`
  width: 100%;
  height: 296px;
  padding: 24px 5px 0 0;
  border: 1px solid #dcdcdc;
  border-left: 0;
  border-right-color: #fff;
  border-right-width: 2px;
`;

const BackGroup = styled.div`
  display: flex;
  flex-direction: column;
  align-items: flex-end;
  height: 260px;
  padding: 11px 3px 0 0;
  border: 1px solid #dcdcdc;
`;

const BackList = styled.div`
  width: 100%;
  height: 219px;
  border: 1px solid #828790;
  background: #f0f0f0;
`;

const BackButton = styled.button`
  height: ${(p) => p.$h}px;
  margin: ${(p) => p.$m};
  padding: 0 ${(p) => p.$pad || 7}px 0 30px;
  border: 1px solid #adadad;
  background: #e9e9e9;
  &:disabled { background: #ccc; color: #838383; border-color: #bfbfbf; }
`;

const BackClose = styled(IconButton)`
  margin: -17px 13px 0 auto;
`;

function TestSetup() {
  return (
    <BackWindow aria-label="测试">
      <WindowTitle $h={43}>
        <BackClose $w={20} $color="#999" aria-label="关闭"><Cross /></BackClose>
      </WindowTitle>
      <BackBody>
        <BackFrame>
          <BackGroup>
            <BackList />
            <BackButton $h={20} $m="5px 10px 0 0" $pad={16} disabled><Lat>(E)</Lat></BackButton>
          </BackGroup>
        </BackFrame>
        <BackButton $h={32} $m="8px -2px 0 0">测试报告</BackButton>
        <BackButton $h={20} $m="18px 18px 0 0" $pad={14}>测试</BackButton>
      </BackBody>
    </BackWindow>
  );
}

/* ---------- bottom bars ---------- */

const QuoteBar = styled.div`
  position: relative;
  display: flex;
  align-items: center;
  height: 24px;
  padding-left: 10px;
  border-top: 2px solid #4a4d50;
  background: #1d2125;
  font-size: 15px;
  line-height: 20px;
  --lat: 13px;
`;

const Quote = styled.div`
  flex: 0 0 21.5%;
  white-space: pre;
`;

const QuoteTools = styled.div`
  display: flex;
  align-items: center;
  justify-content: flex-end;
  flex: 1;
  height: 22px;
  padding-right: 13px;
  font-size: 13px;
`;

const QuoteTool = styled(IconButton)`
  width: 30px;
  height: 22px;
  border-left: 1px solid #54585c;
`;

const NowButton = styled.button`
  padding-right: 10px;
  white-space: nowrap;
`;

const Clock = styled.span`
  padding-left: 3px;
  border-left: 1px solid #54585c;
  font-size: 12px;
  line-height: 22px;
`;

const ImeBar = styled.div`
  position: absolute;
  right: 351px;
  top: 0;
  display: flex;
  align-items: center;
  width: 203px;
  height: 22px;
  padding-left: 27px;
  background: #fff;
  color: #1f74c8;
  & > button { flex: 1; display: flex; justify-content: center; font-size: 15px; font-weight: 700; }
  & > svg { position: absolute; left: -4px; top: -5px; }
`;

const TaskBar = styled.footer`
  display: flex;
  align-items: center;
  height: 40px;
  background: #1c1c1c;
  color: #fff;
`;

const Task = styled.button`
  position: relative;
  display: flex;
  align-items: center;
  justify-content: center;
  width: 48px;
  height: 40px;
  margin-right: ${(p) => (p.$app ? 1 : 0)}px;
  background: ${(p) => p.$bg || 'none'};
  &::after {
    content: '';
    position: absolute;
    bottom: 0;
    width: ${(p) => (p.$bg ? 48 : 40)}px;
    height: ${(p) => (p.$open ? 2 : 0)}px;
    background: #76b9ed;
  }
`;

const SearchBox = styled.label`
  display: flex;
  align-items: center;
  width: 288px;
  height: 40px;
  padding: 0 3px 0 11px;
  gap: 11px;
  border: 1px solid #c0c0c0;
  background: #f2f2f2;
  color: #222;
  font-size: 14px;
  & > input { flex: 1; min-width: 0; border: 0; padding: 0; background: none; outline: 0; }
  & > input::placeholder { color: #222; opacity: 1; }
`;

const Apps = styled.div`
  display: flex;
  padding-left: 3px;
`;

const Tray = styled.div`
  display: flex;
  align-items: center;
  height: 40px;
  margin-left: auto;
  margin-right: 4px;
  border-right: 1px solid #555;
`;

const TrayClock = styled.div`
  width: 92px;
  text-align: center;
  font-size: 12px;
  line-height: 19px;
`;

const SogouLogo = ({ size }) => (
  <svg width={size} height={size} viewBox="0 0 28 28">
    <path d="M2 5L23 1l4 21-20 5z" fill="#f4511e" stroke="#f4511e" strokeWidth="2" strokeLinejoin="round" />
    <path d="M21 8c-5-2-12-1-12 2.500 0 4 11 2 11.500 6 0 4-7 5-13 3" fill="none" stroke="#fff" strokeWidth="3.500" strokeLinecap="round" />
  </svg>
);

const AppLogo = ({ size = 22 }) => (
  <svg width={size} height={size} viewBox="0 0 24 24">
    <path d="M0 0h24v24H0z" fill="#f01010" />
    <path d="M3 3h18v18H3z" fill="#fff" />
    <path d="M4 5h11l-3 3H4zM3 18l4-4v5H3z" fill="#f01010" />
    <path d="M21 3v4L10 18l-4 1 1-5L18 3z" fill="#e80808" />
    <path d="M4 15l3 3M7 15l-3 3" stroke="#fff" />
  </svg>
);

const swirl = (bg) => (
  <svg width="24" height="24" viewBox="0 0 24 24">
    <rect width="24" height="24" rx="4" fill={bg} />
    <path d="M5 6c4-4 12-4 14 2 2 7-2 12-9 13 5-3 7-6 6-9-1-4-5-4-7-2-1 3 1 5 4 4-1 3-5 4-7 1-2-2-2-6-1-9z" fill="#fff" />
    <path d="M3 10c0 5 3 8 7 8-3 3-8 0-7-8z" fill="#fff" />
  </svg>
);

const whLogo = (digit) => (
  <svg width="24" height="24" viewBox="0 0 24 24">
    <path d="M0 0h24v24H0z" fill="#0a0a0a" />
    <path d="M0 7l5-3V0h3v4l4 3v17H0z" fill="#c01c20" />
    <path d="M14 0h10v18l-6 6h-4z" fill="#12468c" />
    <text x="0" y="17" fontSize="11" fontWeight="700" fill="#fff" fontFamily="Liberation Sans, sans-serif">wh</text>
    <text x="13" y="21" fontSize="24" fontStyle="italic" fill="#fff" fontFamily="Liberation Serif, serif">{digit}</text>
  </svg>
);

const APPS = [
  {
    name: 'Edge', open: true, icon: (
      <svg width="24" height="24" viewBox="0 0 24 24">
        <circle cx="12" cy="12" r="12" fill="#1480d4" />
        <path d="M1 8C4-1 16-3 22 5c3 5 2 10-3 11-4 1-6-1-5-3 2-3-1-6-5-6-4 0-7 2-8 4z" fill="#35c1b0" />
        <path d="M14 1c6 1 11 6 9.500 11-1 3-5 5-8 3 3-4 0-9-5-9z" fill="#5cd860" />
        <path d="M8 11c-1 6 4 11 13 9-4 5-12 5-16 1-4-5 0-10 3-10z" fill="#0c59a4" />
        <path d="M14 13c-2 3 3 6 9 3l-2 3c-7 2-11-2-9-6z" fill="#1c1c1c" />
      </svg>
    ),
  },
  {
    name: '文件资源管理器', icon: (
      <svg width="22" height="20" viewBox="0 0 22 20">
        <path d="M0 1h8l2 2h12v15H0z" fill="#e8a33d" />
        <path d="M0 5h22v13H0z" fill="#ffd75e" />
        <path d="M4 10h14v8h-4v-4H8v4H4z" fill="#3f97dd" />
      </svg>
    ),
  },
  {
    name: '画图', open: true, icon: (
      <svg width="24" height="24" viewBox="0 0 24 24">
        <path d="M1 12C2 6 8 3 14 4c6 1 8 6 7 11-1 6-8 9-12 7-3-2 0-4-2-6-3-1-6 0-6-4z" fill="#d8ecf6" />
        <circle cx="6" cy="10" r="2" fill="#e03030" />
        <circle cx="11" cy="7" r="2" fill="#58a83a" />
        <circle cx="16" cy="9" r="2" fill="#f0a020" />
        <circle cx="13" cy="17" r="2" fill="#2050c0" />
        <path d="M20 1l3 1-7 18-2 3 1-6z" fill="#d88a40" />
      </svg>
    ),
  },
  { name: '行情', icon: swirl('#dd3f36') },
  { name: '交易', icon: swirl('#e8141a') },
  {
    name: 'Trade', icon: (
      <svg width="22" height="22" viewBox="0 0 22 22">
        <circle cx="11" cy="11" r="10" fill="#3a7ee0" stroke="#c8daf4" strokeWidth="1.500" />
        <path d="M3 8a9 9 0 0 1 16 0z" fill="#7aaef0" />
        <text x="11" y="14" fontSize="7" fontWeight="700" textAnchor="middle" fill="#fff" fontFamily="Liberation Sans, sans-serif">Trade</text>
      </svg>
    ),
  },
  { name: 'wh7', open: true, icon: whLogo('7') },
  {
    name: '终端', icon: (
      <svg width="24" height="24" viewBox="0 0 24 24">
        <rect width="24" height="24" rx="4" fill="#fff" />
        <path d="M2 21l20-4v4q0 3-3 3H5q-3 0-3-3z" fill="#dfc080" />
        <path d="M6.500 6v10H17v-5" fill="none" stroke="#104890" strokeWidth="3" />
        <path d="M9 5h9v8" fill="none" stroke="#f0960c" strokeWidth="3" />
      </svg>
    ),
  },
  {
    name: '量化', icon: (
      <svg width="20" height="24" viewBox="0 0 20 24">
        <path d="M1 0h12l5 4v5l-3 3 4 4v5l-4 3H1z" fill="#c83018" />
        <path d="M1 0h12l5 4v3H1z" fill="#e07820" />
        <path d="M7 6h12M8 10h12M7 14h12M8 18h12" stroke="#1c1c1c" />
      </svg>
    ),
  },
  {
    name: '趋势', icon: (
      <svg width="24" height="24" viewBox="0 0 24 24">
        <path d="M0 23l5-13 4 3 5-7-2-2L24 1l-4 11-2-2-7 9-4-4z" fill="#e01828" />
        <path d="M5 10l4 3 5-7-2-2L24 1 9 15z" fill="#f86868" />
      </svg>
    ),
  },
  { name: '金字塔', open: true, bg: '#4a4a4a', icon: <AppLogo size={24} /> },
  { name: 'wh6', bg: '#333', icon: whLogo('6') },
  {
    name: 'DP', icon: (
      <svg width="24" height="24" viewBox="0 0 24 24" fill="none">
        <rect x="1" y="1" width="22" height="22" rx="4" fill="#031428" stroke="#1270f0" strokeWidth="1.500" />
        <path d="M12 19V9c0-3 2-4 4-4s3 1.500 3 4-2 4-4 4H9c-2 0-4 1-4 3.500S7 20 8.500 20s3.500-1 3.500-3" stroke="#28b8f8" strokeWidth="2" />
      </svg>
    ),
  },
  {
    name: 'DA', icon: (
      <svg width="24" height="24" viewBox="0 0 24 24">
        <rect width="24" height="24" rx="5" fill="#f8f6f0" />
        <text x="12" y="16" fontSize="12" fontWeight="700" textAnchor="middle" fill="#f0a818" fontFamily="DejaVu Sans, sans-serif">DA</text>
      </svg>
    ),
  },
  {
    name: 'WPS', icon: (
      <svg width="24" height="18" viewBox="0 0 24 18" fill="none" stroke="#f04818" strokeWidth="3">
        <path d="M1 2h4l4 13 6-10M13 2h9l-5 13-5-13" />
      </svg>
    ),
  },
  {
    name: '牛股', open: true, icon: (
      <svg width="24" height="24" viewBox="0 0 24 24">
        <rect width="24" height="24" rx="4" fill="#fff" />
        <path d="M4 5l11 13V4h5v16L10 12v6z" fill="#e01c20" />
      </svg>
    ),
  },
];

const Bagpipe = () => (
  <svg width="68" height="38" viewBox="0 0 68 38" fill="none">
    <path d="M19 23l2-10M27 21V1M33 20l3-16M39 20l3-14" stroke="#c89020" strokeWidth="3" />
    <path d="M15 22c-8 14 34 18 29 2-1-7-9-8-15-4-5 3-9 3-14 2z" fill="#c04828" />
    <path d="M17 26c7 8 18 8 26 0M20 22c5 8 13 11 20 11" stroke="#f0c0a0" />
    <path d="M13 22L5 35" stroke="#b08018" strokeWidth="3" />
    <path d="M27 4c12-4 26-4 29 4s-4 13-6 14M50 22l2 8" stroke="#a85048" />
    <path d="M51 24l3 8" stroke="#d8a020" strokeWidth="3" />
    <path d="M4 14V5l7-1v9M60 27v-8l5 4" stroke="#504060" strokeWidth="1.500" />
    <circle cx="3" cy="14" r="2" fill="#504060" /><circle cx="10" cy="13" r="2" fill="#504060" />
    <circle cx="59" cy="28" r="2" fill="#504060" />
  </svg>
);

const Restore = ({ size = 9 }) => (
  <svg width={size} height={size} viewBox="0 0 9 9" fill="none" stroke="currentColor">
    <path d="M.5 3.500h5v5h-5zM3 3V.5h5.500v5H6" />
  </svg>
);

const Dash = () => <svg width="7" height="9" stroke="currentColor" strokeWidth="2"><path d="M0 7h6" /></svg>;

const UserOutline = () => (
  <svg width="15" height="16" viewBox="0 0 15 16" fill="none" stroke="currentColor">
    <circle cx="7.500" cy="4" r="3.300" /><path d="M5 7C2 9 1 12 1 15h13c0-3-1-6-4-8" />
  </svg>
);

const FxIcon = () => (
  <svg width="14" height="14" viewBox="0 0 14 14" fill="none" stroke="currentColor">
    <path d="M.5.5h13v13H.5z" />
    <path d="M8 3c-2-1-2 1-2.500 4S4 11 3 10M4 6h4M7 7l4 4M11 7l-4 4" />
  </svg>
);

const AiHead = () => (
  <svg width="17" height="16" viewBox="0 0 17 16" fill="none" stroke="currentColor" strokeWidth="1.300">
    <path d="M5 15v-3H3V9L1 8l2-2c0-3 3-5 6-5 5 0 7 3 7 6 0 4-3 4-3 8" />
    <path d="M6 9l2-5 2 5M7 7.500h2M12 4v5" />
  </svg>
);

const MENU = ['文件(F)', '板块(M)', '画面(P)', '查看(V)', '交易(O)', '分析(A)', '工具(T)', '窗口(W)', '帮助(H)'];
const TABS = [
  'IC500', 'IC500沽', 'TWS多品种交', '苯乙烯', '表日分框架', '豆采油', '分解500期权', '股票选面', '国债10',
  '恒指期货', '恒指期货', '沪金银', '沪镍', '沪铜',
];
const QUOTES = [
  ['上证指数 ', '3357.3 (-15.28) ', '4483亿'],
  ['深证成指 ', '10793 (-50.67) ', '6956亿'],
  ['中证500ETF ', '5.992 (-0.021) ', '17.5亿'],
  ['中证500(ZJ) ', '6004.2 (-9.61) ', '1926亿'],
];

export default function App() {
  return (
    <Desktop>
      <GlobalStyle />
      <TitleBar>
        <AppLogo size={20} />
        <TitleText>金字塔决策交易系统 - [100009612] - [美黄金]</TitleText>
        <TitleIcons>
          <IconButton aria-label="订阅"><Rss size={13} strokeWidth={2} /></IconButton>
          <IconButton aria-label="用户"><UserOutline /></IconButton>
          <IconButton aria-label="公告">
            <svg width="13" height="15" fill="none" stroke="currentColor"><path d="M.5.5h12v14H.5zM3 4.500h1M6 4.500h4M3 7.500h1M6 7.500h4M3 10.500h1M6 10.500h4" /></svg>
          </IconButton>
          <IconButton aria-label="商城"><ShoppingCart size={15} strokeWidth={1.5} /></IconButton>
          <IconButton aria-label="公式"><FxIcon /></IconButton>
          <IconButton aria-label="Python"><TbBrandPython size={17} /></IconButton>
          <IconButton aria-label="客服"><Headphones size={15} strokeWidth={1.5} /></IconButton>
          <IconButton aria-label="最小化"><Dash /></IconButton>
          <IconButton aria-label="还原"><Restore /></IconButton>
          <IconButton $w={34} aria-label="关闭"><Cross size={8} /></IconButton>
        </TitleIcons>
      </TitleBar>
      <MenuBar>
        <Grip />
        <MenuIcon>
          <svg width="16" height="14" viewBox="0 0 16 14">
            <path d="M4 1h11v12H4z" fill="#fff" stroke="#224" />
            <path d="M9 4h6M9 7h6M9 10h6" stroke="#d02020" />
            <path d="M1 1h8v10H1z" fill="#fff" stroke="#e01010" />
            <path d="M3 9l5-6M3 3h4" stroke="#e01010" strokeWidth="2" />
          </svg>
        </MenuIcon>
        {MENU.map((name) => <button key={name}>{name}</button>)}
        <MenuRight>
          <IconButton $w={17} $color="#fff" aria-label="最小化窗口"><Dash /></IconButton>
          <IconButton $w={17} $color="#fff" aria-label="还原窗口"><Restore /></IconButton>
          <IconButton $w={16} $color="#fff" aria-label="关闭窗口"><Cross size={8} /></IconButton>
        </MenuRight>
      </MenuBar>
      <TabBar>
        <Grip />
        <TabGroup>{TABS.map((name, i) => <PageTab key={i}>{name}</PageTab>)}</TabGroup>
        <HiddenTabs />
        <TabGroup>
          <PageTab>中证500期权</PageTab>
          <PageTab>中证期权</PageTab>
          <PageTab $last>转债</PageTab>
          <TabClose aria-label="关闭标签"><Cross size={8} /></TabClose>
        </TabGroup>
      </TabBar>

      <Workspace>
        <Column $rows="493fr 646fr 156fr">
          <PricePanel />
          <PercentPanel />
          <VolumePanel />
        </Column>
        <Column $edge $rows="467fr 492fr 337fr">
          <ClosePanel />
          <FanPanel
            box={[RX0, RX1, 69, 1494]} rows={[358, 769, 1183]} zero={MID_ZERO} main={MID_MAIN} thin={MID_THIN}
            ticks={[[358, '1.00'], [769, '0.00'], [1183, '-1.00']]} lead={126}
            head={['Q1:-0.66↓', 'Q2:0.66↑', 'Q3:0.27↓', 'Q4:-0.27↑', 'Q5:-0.15↓', 'Q6:0.15↑', 'Q7:-0.275↓', 'Q8:0.275↑']}
          />
          <FanPanel
            last flip
            box={[RX0, RX1, 75, 1035]} rows={[283, 544, 805]} zero={LOW_ZERO} main={LOW_MAIN} thin={LOW_THIN}
            ticks={[[283, '5.00'], [544, '0.00'], [805, '-5.00']]} lead={154}
            head={['Q1:5.393↓', 'Q2:-5.393↑', 'Q3:-1.143↑', 'Q4:1.143↓', 'Q5:0.267↓', 'Q6:-0.267↑']}
          />
        </Column>
      </Workspace>

      <TestSetup />
      <TestReport />

      <QuoteBar>
        {QUOTES.map(([name, price, amount]) => (
          <Quote key={name}>
            {name}
            <Tint $c="#00f000"><Lat>{price}</Lat></Tint>
            <Mixed>{amount}</Mixed>
          </Quote>
        ))}
        <QuoteTools>
          <NowButton>即时行情...</NowButton>
          <QuoteTool aria-label="Python"><TbBrandPython size={17} /></QuoteTool>
          <QuoteTool aria-label="数据"><Cylinder size={15} strokeWidth={1.5} /></QuoteTool>
          <QuoteTool aria-label="雷达"><Radar size={15} strokeWidth={1.5} /></QuoteTool>
          <QuoteTool aria-label="提醒"><Bell size={16} strokeWidth={1.5} /></QuoteTool>
          <QuoteTool $color="#8c8c8c" aria-label="连接"><CircleDot size={14} strokeWidth={1.5} /></QuoteTool>
          <QuoteTool $color="#8c8c8c" aria-label="服务器"><Server size={14} strokeWidth={1.5} /></QuoteTool>
          <QuoteTool aria-label="AI"><AiHead /></QuoteTool>
          <Clock>13:40:29</Clock>
        </QuoteTools>
        <ImeBar>
          <SogouLogo size={28} />
          <button>中</button>
          <button>°,</button>
          <button aria-label="表情"><Smile size={17} /></button>
          <button aria-label="语音"><Mic size={16} fill="currentColor" /></button>
          <button aria-label="键盘"><Keyboard size={17} /></button>
          <button aria-label="账户">
            <svg width="16" height="16" viewBox="0 0 16 16" fill="#b8c4d8">
              <circle cx="6" cy="4" r="3" /><path d="M0 14c0-8 12-8 12 0z" /><path d="M7 9h9v6H7z" fill="#98a8c4" />
            </svg>
          </button>
          <button aria-label="皮肤"><FaTshirt size={15} /></button>
          <button aria-label="工具">
            <svg width="14" height="14" viewBox="0 0 14 14" fill="#1f74c8">
              <path d="M0 0h6v6H0zM0 8h6v6H0zM8 8h6v6H8z" /><path d="M9 1h4v4H9z" fill="none" stroke="#1f74c8" strokeWidth="2" />
            </svg>
          </button>
        </ImeBar>
      </QuoteBar>

      <TaskBar>
        <Task aria-label="开始">
          <svg width="16" height="16" viewBox="0 0 16 16" fill="#fff">
            <path d="M0 2l7-1v6.500H0zM8 1l8-1v7.500H8zM0 8.500h7V15l-7-1zM8 8.500h8V16l-8-1z" />
          </svg>
        </Task>
        <SearchBox>
          <Search size={17} strokeWidth={1.5} transform="scale(-1 1)" />
          <input placeholder="搜索" aria-label="搜索" />
          <Bagpipe />
        </SearchBox>
        <Task aria-label="任务视图">
          <svg width="17" height="16" viewBox="0 0 17 16" fill="none" stroke="#fff">
            <path d="M.5 0v2.500h11V0M.5 4.500h11v7H.5zM.5 16v-2.500h11V16M14.500 0v4M14.500 9v7" />
            <path d="M13 5h3v3h-3z" fill="#fff" stroke="none" />
          </svg>
        </Task>
        <Apps>
          {APPS.map((app) => (
            <Task key={app.name} $app $open={app.open} $bg={app.bg} aria-label={app.name}>{app.icon}</Task>
          ))}
        </Apps>
        <Tray>
          <IconButton $w={24} $color="#fff" aria-label="更多"><ChevronUp size={18} strokeWidth={1.5} /></IconButton>
          <IconButton $w={24} $color="#d8d8d8" aria-label="OneDrive"><FaCloud size={16} /></IconButton>
          <IconButton $w={24} $color="#fff" aria-label="网络">
            <svg width="17" height="14" viewBox="0 0 17 14" fill="none" stroke="currentColor">
              <path d="M5 1.500h11v8H3V6M9.500 10v3M6 13.500h7M.5.5h4v4h-4zM2.500 5v5" />
            </svg>
          </IconButton>
          <IconButton $w={24} $color="#fff" aria-label="音量"><Volume2 size={16} strokeWidth={1.5} /></IconButton>
          <IconButton $w={24} $color="#fff" aria-label="输入法">中</IconButton>
          <IconButton $w={34} aria-label="搜狗"><SogouLogo size={16} /></IconButton>
          <TrayClock>13:40<br />2025-03-10</TrayClock>
          <IconButton $w={36} $color="#fff" aria-label="通知">
            <svg width="17" height="17" viewBox="0 0 17 17">
              <path d="M0 0h17v13h-6l-2.500 4L6 13H0z" fill="#fff" />
              <path d="M3 3.500h11M3 6.500h11M3 9.500h7" stroke="#1c1c1c" />
            </svg>
          </IconButton>
        </Tray>
      </TaskBar>
    </Desktop>
  );
}
